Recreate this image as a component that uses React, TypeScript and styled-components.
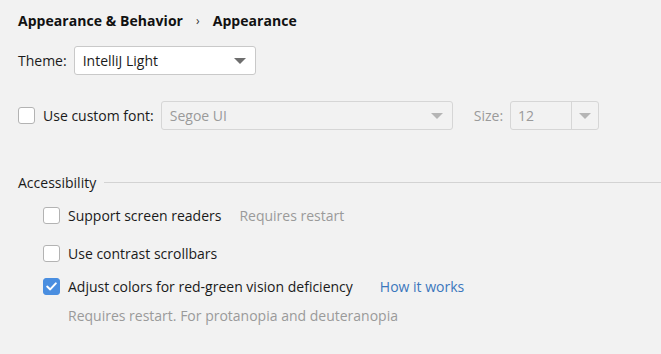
import React from 'react'
import styled, { createGlobalStyle } from 'styled-components'

const GlobalStyle = createGlobalStyle`
    html, body {
        margin: 0;
        padding: 0;
        background: #f2f2f2;
    }
    body {
        font-family: "Open Sans", "Noto Sans", sans-serif;
        font-size: 14px;
        line-height: 19px;
        color: #1a1a1a;
    }
`

const Page = styled.div`
    width: 661px;
    height: 354px;
    padding: 10px 0 0 18px;
    box-sizing: border-box;
    display: flex;
    flex-direction: column;
    overflow: hidden;
`

const Breadcrumb = styled.div`
    display: flex;
    align-items: center;
    gap: 11px;
    height: 20px;
    font-weight: 700;
    font-size: 14px;
    letter-spacing: 0.05px;
    color: #111;
`

const Chevron = styled.span`
    font-weight: 400;
    font-size: 12px;
    color: #333;
    margin: 0 2px;
`

const Row = styled.div<{ $top: number, $indent?: number }>`
    display: flex;
    align-items: center;
    margin-top: ${p => p.$top}px;
    padding-left: ${p => p.$indent ?? 0}px;
    gap: 7px;
`

const Label = styled.span<{ $muted?: boolean, $space?: number }>`
    color: ${p => p.$muted ? '#9a9a9a' : '#1a1a1a'};
    margin-left: ${p => p.$space ?? 0}px;
    white-space: nowrap;
`

const Combo = styled.div<{ $width: number, $disabled?: boolean }>`
    width: ${p => p.$width}px;
    height: 29px;
    box-sizing: border-box;
    display: flex;
    align-items: center;
    justify-content: space-between;
    padding: 0 8px 0 8px;
    background: ${p => p.$disabled ? '#f2f2f2' : '#ffffff'};
    border: 1px solid ${p => p.$disabled ? '#d6d6d6' : '#c9c9c9'};
    border-radius: 3px;
    color: ${p => p.$disabled ? '#9a9a9a' : '#1a1a1a'};
`

const SizeBox = styled.div`
    width: 89px;
    height: 29px;
    box-sizing: border-box;
    display: flex;
    align-items: stretch;
    border: 1px solid #d6d6d6;
    border-radius: 3px;
    color: #9a9a9a;
`

const SizeValue = styled.div`
    flex: 1;
    display: flex;
    align-items: center;
    padding-left: 7px;
    border-right: 1px solid #d6d6d6;
`

const SizeArrow = styled.div`
    width: 26px;
    display: flex;
    align-items: center;
    justify-content: center;
`

const Arrow = styled.span<{ $disabled?: boolean }>`
    width: 0;
    height: 0;
    margin-right: 1px;
    border-left: 6px solid transparent;
    border-right: 6px solid transparent;
    border-top: 6px solid ${p => p.$disabled ? '#b5b5b5' : '#6e6e6e'};
`

const Box = styled.span<{ $checked?: boolean }>`
    width: 17px;
    height: 17px;
    box-sizing: border-box;
    border-radius: 3px;
    flex-shrink: 0;
    margin-right: 1px;
    display: flex;
    align-items: center;
    justify-content: center;
    background: ${p => p.$checked ? '#4a8ee0' : '#ffffff'};
    border: 1px solid ${p => p.$checked ? '#4a8ee0' : '#b3b3b3'};
`

const Section = styled.div`
    display: flex;
    align-items: center;
    margin-top: 43px;
    gap: 8px;
`

const Rule = styled.div`
    flex: 1;
    height: 1px;
    background: #d3d3d3;
`

const Link = styled.span`
    color: #3b77bd;
    margin-left: 20px;
`

const Hint = styled.div`
    color: #9a9a9a;
    margin: 10px 0 0 50px;
`

const Checkbox = ({ checked }: { checked?: boolean }) => (
    <Box $checked={checked}>
        {checked && (
            <svg width="11" height="9" viewBox="0 0 11 9">
                <path d="M1.2 4.6 L4.2 7.4 L9.8 1.4" fill="none" stroke="#fff" strokeWidth="2" strokeLinecap="round" strokeLinejoin="round" />
            </svg>
        )}
    </Box>
)

const App = () => {
    return (
        <>
            <GlobalStyle />
            <Page>
                <Breadcrumb>
                    <span>Appearance &amp; Behavior</span>
                    <Chevron>›</Chevron>
                    <span>Appearance</span>
                </Breadcrumb>

                <Row $top={16}>
                    <Label>Theme:</Label>
                    <Combo $width={182}>
                        <span>IntelliJ Light</span>
                        <Arrow />
                    </Combo>
                </Row>

                <Row $top={26}>
                    <Checkbox />
                    <Label>Use custom font:</Label>
                    <Combo $width={292} $disabled>
                        <span>Segoe UI</span>
                        <Arrow $disabled />
                    </Combo>
                    <Label $muted $space={14}>Size:</Label>
                    <SizeBox>
                        <SizeValue>12</SizeValue>
                        <SizeArrow><Arrow $disabled /></SizeArrow>
                    </SizeBox>
                </Row>

                <Section>
                    <Label>Accessibility</Label>
                    <Rule />
                </Section>

                <Row $top={14} $indent={25}>
                    <Checkbox />
                    <Label>Support screen readers</Label>
                    <Label $muted $space={11}>Requires restart</Label>
                </Row>

                <Row $top={19} $indent={25}>
                    <Checkbox />
                    <Label>Use contrast scrollbars</Label>
                </Row>

                <Row $top={14} $indent={25}>
                    <Checkbox checked />
                    <Label>Adjust colors for red-green vision deficiency</Label>
                    <Link>How it works</Link>
                </Row>
                <Hint>Requires restart. For protanopia and deuteranopia</Hint>
            </Page>
        </>
    )
}

export default App
